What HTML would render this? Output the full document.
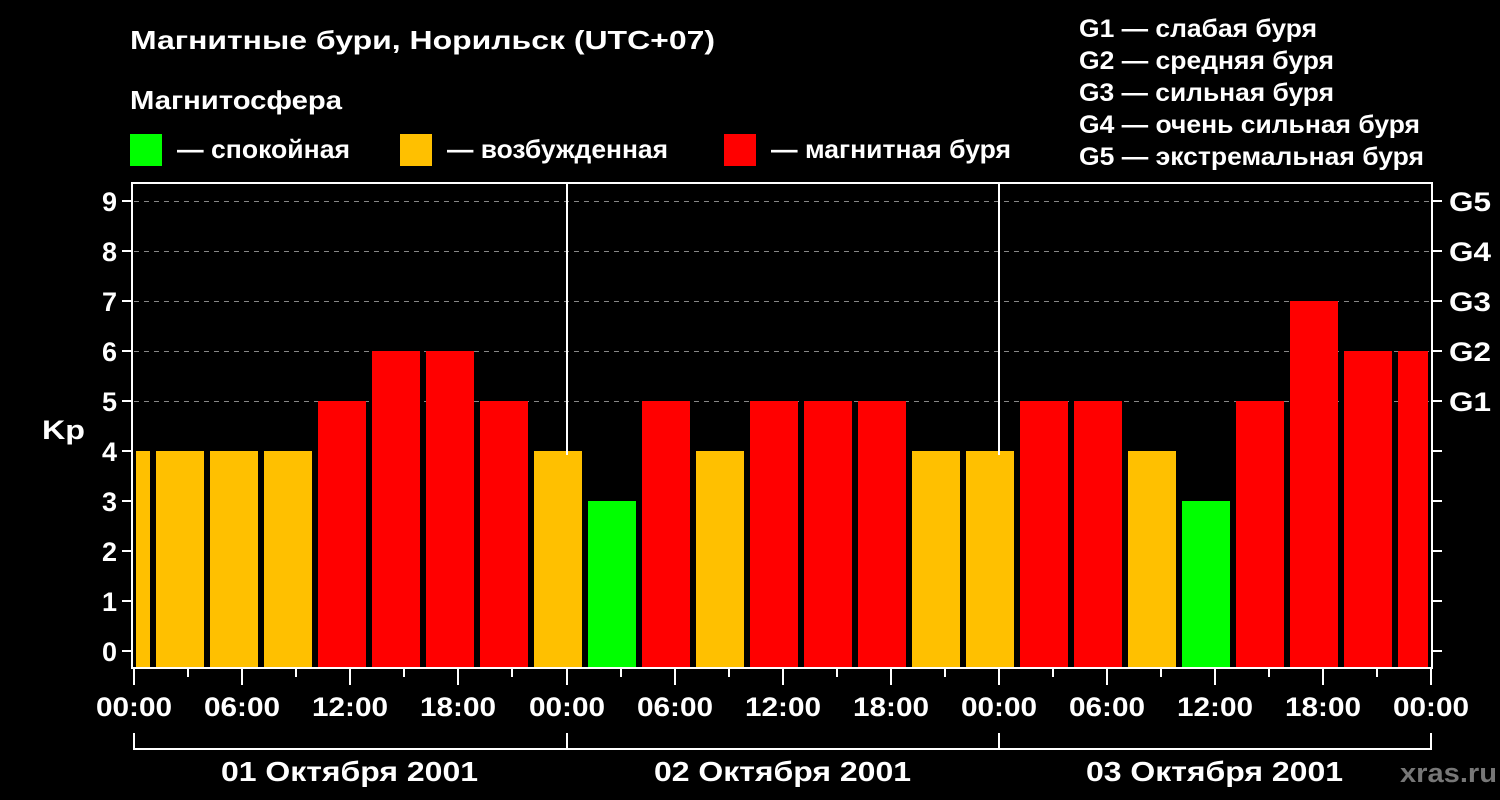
<!DOCTYPE html><html><head><style>body{margin:0;background:#000;}svg{display:block}text{font-family:"Liberation Sans",sans-serif;font-weight:bold;fill:#fff}</style></head><body>
<svg width="1500" height="800" xmlns="http://www.w3.org/2000/svg">
<rect width="1500" height="800" fill="#000"/>
<text x="130" y="49" font-size="26" textLength="585" lengthAdjust="spacingAndGlyphs">Магнитные бури, Норильск (UTC+07)</text>
<text x="130" y="109" font-size="26" textLength="212" lengthAdjust="spacingAndGlyphs">Магнитосфера</text>
<rect x="130" y="134" width="32" height="32" fill="#00ff00"/>
<text x="177" y="158" font-size="26" textLength="173" lengthAdjust="spacingAndGlyphs">— спокойная</text>
<rect x="400" y="134" width="32" height="32" fill="#ffc000"/>
<text x="447" y="158" font-size="26" textLength="221" lengthAdjust="spacingAndGlyphs">— возбужденная</text>
<rect x="724" y="134" width="32" height="32" fill="#ff0000"/>
<text x="771" y="158" font-size="26" textLength="240" lengthAdjust="spacingAndGlyphs">— магнитная буря</text>
<g font-size="25">
<text x="1079" y="37" textLength="238" lengthAdjust="spacingAndGlyphs">G1 — слабая буря</text>
<text x="1079" y="69" textLength="255" lengthAdjust="spacingAndGlyphs">G2 — средняя буря</text>
<text x="1079" y="101" textLength="255" lengthAdjust="spacingAndGlyphs">G3 — сильная буря</text>
<text x="1079" y="133" textLength="341" lengthAdjust="spacingAndGlyphs">G4 — очень сильная буря</text>
<text x="1079" y="165" textLength="345" lengthAdjust="spacingAndGlyphs">G5 — экстремальная буря</text>
</g>
<g stroke="#888" stroke-width="1" stroke-dasharray="5,5">
<line x1="134" y1="201.5" x2="1431" y2="201.5"/><line x1="134" y1="251.5" x2="1431" y2="251.5"/><line x1="134" y1="301.5" x2="1431" y2="301.5"/><line x1="134" y1="351.5" x2="1431" y2="351.5"/><line x1="134" y1="401.5" x2="1431" y2="401.5"/>
</g>
<g>
<rect x="136" y="451" width="14" height="217" fill="#ffc000"/>
<rect x="156" y="451" width="48" height="217" fill="#ffc000"/>
<rect x="210" y="451" width="48" height="217" fill="#ffc000"/>
<rect x="264" y="451" width="48" height="217" fill="#ffc000"/>
<rect x="318" y="401" width="48" height="267" fill="#ff0000"/>
<rect x="372" y="351" width="48" height="317" fill="#ff0000"/>
<rect x="426" y="351" width="48" height="317" fill="#ff0000"/>
<rect x="480" y="401" width="48" height="267" fill="#ff0000"/>
<rect x="534" y="451" width="48" height="217" fill="#ffc000"/>
<rect x="588" y="501" width="48" height="167" fill="#00ff00"/>
<rect x="642" y="401" width="48" height="267" fill="#ff0000"/>
<rect x="696" y="451" width="48" height="217" fill="#ffc000"/>
<rect x="750" y="401" width="48" height="267" fill="#ff0000"/>
<rect x="804" y="401" width="48" height="267" fill="#ff0000"/>
<rect x="858" y="401" width="48" height="267" fill="#ff0000"/>
<rect x="912" y="451" width="48" height="217" fill="#ffc000"/>
<rect x="966" y="451" width="48" height="217" fill="#ffc000"/>
<rect x="1020" y="401" width="48" height="267" fill="#ff0000"/>
<rect x="1074" y="401" width="48" height="267" fill="#ff0000"/>
<rect x="1128" y="451" width="48" height="217" fill="#ffc000"/>
<rect x="1182" y="501" width="48" height="167" fill="#00ff00"/>
<rect x="1236" y="401" width="48" height="267" fill="#ff0000"/>
<rect x="1290" y="301" width="48" height="367" fill="#ff0000"/>
<rect x="1344" y="351" width="48" height="317" fill="#ff0000"/>
<rect x="1398" y="351" width="30" height="317" fill="#ff0000"/>
</g>
<g stroke="#fff" stroke-width="2" fill="none">
<rect x="132" y="183" width="1300" height="485"/>
<line x1="567" y1="183" x2="567" y2="455"/><line x1="999" y1="183" x2="999" y2="455"/>
<path d="M122 201H132M122 251H132M122 301H132M122 351H132M122 401H132M122 451H132M122 501H132M122 551H132M122 601H132M122 651H132"/>
<path d="M1432 201H1442M1432 251H1442M1432 301H1442M1432 351H1442M1432 401H1442M1432 451H1442M1432 501H1442M1432 551H1442M1432 601H1442M1432 651H1442"/>
<path d="M134 749H1431M134 733V750M567 733V750M999 733V750M1431 733V750"/>
<path d="M134 669V685M188 669V677M242 669V685M296 669V677M350 669V685M404 669V677M458 669V685M512 669V677M567 669V685M621 669V677M675 669V685M729 669V677M783 669V685M837 669V677M891 669V685M945 669V677M999 669V685M1053 669V677M1107 669V685M1161 669V677M1215 669V685M1269 669V677M1323 669V685M1377 669V677M1431 669V685"/>
</g>
<g font-size="27" text-anchor="end">
<text x="117" y="211">9</text><text x="117" y="261">8</text><text x="117" y="311">7</text><text x="117" y="361">6</text><text x="117" y="411">5</text><text x="117" y="461">4</text><text x="117" y="511">3</text><text x="117" y="561">2</text><text x="117" y="611">1</text><text x="117" y="661">0</text>
</g>
<g font-size="27">
<text x="1449" y="211" textLength="42" lengthAdjust="spacingAndGlyphs">G5</text><text x="1449" y="261" textLength="42" lengthAdjust="spacingAndGlyphs">G4</text><text x="1449" y="311" textLength="42" lengthAdjust="spacingAndGlyphs">G3</text><text x="1449" y="361" textLength="42" lengthAdjust="spacingAndGlyphs">G2</text><text x="1449" y="411" textLength="42" lengthAdjust="spacingAndGlyphs">G1</text>
</g>
<text x="42" y="439" font-size="27" textLength="43" lengthAdjust="spacingAndGlyphs">Kp</text>
<g font-size="27">
<text x="96" y="716" textLength="76" lengthAdjust="spacingAndGlyphs">00:00</text>
<text x="204" y="716" textLength="76" lengthAdjust="spacingAndGlyphs">06:00</text>
<text x="312" y="716" textLength="76" lengthAdjust="spacingAndGlyphs">12:00</text>
<text x="420" y="716" textLength="76" lengthAdjust="spacingAndGlyphs">18:00</text>
<text x="529" y="716" textLength="76" lengthAdjust="spacingAndGlyphs">00:00</text>
<text x="637" y="716" textLength="76" lengthAdjust="spacingAndGlyphs">06:00</text>
<text x="745" y="716" textLength="76" lengthAdjust="spacingAndGlyphs">12:00</text>
<text x="853" y="716" textLength="76" lengthAdjust="spacingAndGlyphs">18:00</text>
<text x="961" y="716" textLength="76" lengthAdjust="spacingAndGlyphs">00:00</text>
<text x="1069" y="716" textLength="76" lengthAdjust="spacingAndGlyphs">06:00</text>
<text x="1177" y="716" textLength="76" lengthAdjust="spacingAndGlyphs">12:00</text>
<text x="1285" y="716" textLength="76" lengthAdjust="spacingAndGlyphs">18:00</text>
<text x="1393" y="716" textLength="76" lengthAdjust="spacingAndGlyphs">00:00</text>
</g>
<g font-size="28">
<text x="221" y="781" textLength="257" lengthAdjust="spacingAndGlyphs">01 Октября 2001</text>
<text x="654" y="781" textLength="257" lengthAdjust="spacingAndGlyphs">02 Октября 2001</text>
<text x="1086" y="781" textLength="257" lengthAdjust="spacingAndGlyphs">03 Октября 2001</text>
</g>
<text x="1400" y="782" font-size="27" textLength="97" lengthAdjust="spacingAndGlyphs" style="fill:#777">xras.ru</text>
</svg></body></html>
